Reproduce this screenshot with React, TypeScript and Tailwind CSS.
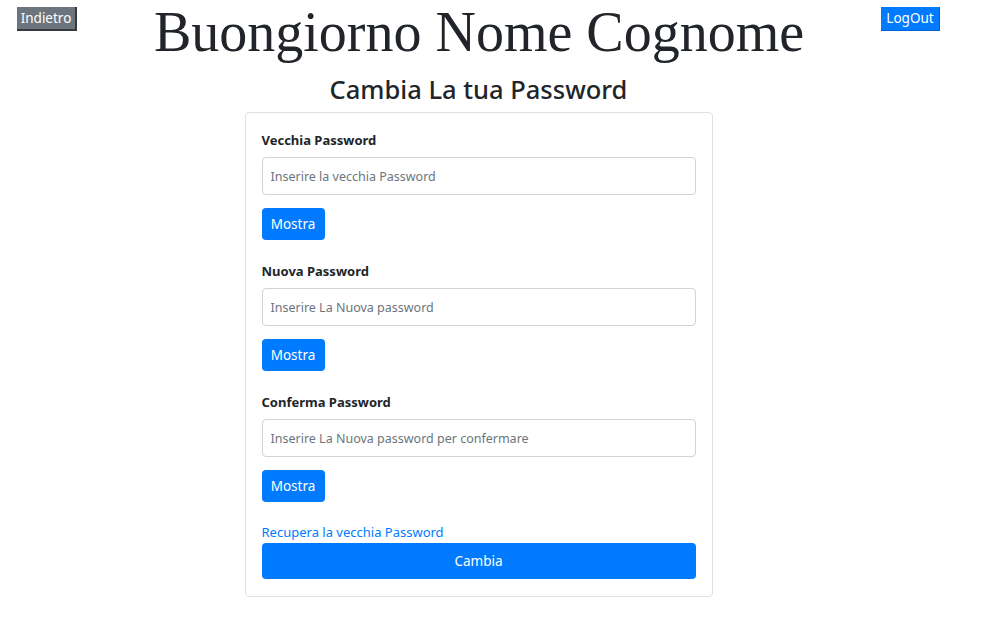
import React from 'react';

const sans = "font-['Noto_Sans','Liberation_Sans',sans-serif]";

type FieldProps = { label: string; placeholder: string; first?: boolean };

const Field: React.FC<FieldProps> = ({ label, placeholder, first }) => (
  <div className={first ? '' : 'mt-[21px]'}>
    <label className="block text-[13px] leading-[20px] font-bold text-[#212529]">{label}</label>
    <input
      type="password"
      placeholder={placeholder}
      className="mt-[7px] block w-full h-[38px] border border-[#ced4da] rounded-[4px] px-[8px] text-[12.5px] text-[#495057] placeholder:text-[#6c757d] outline-none"
    />
    <button className="mt-[13px] block h-[32px] w-[63px] rounded-[4px] bg-[#007bff] text-white text-[13.5px]">
      Mostra
    </button>
  </div>
);

export default function App() {
  return (
    <div className={`w-[957px] min-h-[637px] bg-white ${sans}`}>
      <header className="flex justify-between items-start px-[17px]">
        <button className="mt-[7px] h-[24px] w-[60px] bg-[#6c757d] text-white text-[13.5px] border-r-2 border-b-2 border-[#343a40]">
          Indietro
        </button>
        <h1 className="mt-[4px] text-[56px] leading-[56px] text-[#212529] font-['Liberation_Serif',serif]">
          Buongiorno Nome Cognome
        </h1>
        <button className="mt-[7px] h-[24px] w-[59px] bg-[#007bff] text-white text-[13.5px] border-r border-b border-[#0062cc]">
          LogOut
        </button>
      </header>
      <h2 className="mt-[14px] text-center text-[25.5px] leading-[30px] font-medium text-[#212529]">
        Cambia La tua Password
      </h2>
      <div className="mx-auto mt-[8px] w-[468px] border border-[#dee2e6] rounded-[4px] px-[16px] pt-[17px] pb-[17px]">
        <Field first label="Vecchia Password" placeholder="Inserire la vecchia Password" />
        <Field label="Nuova Password" placeholder="Inserire La Nuova password" />
        <Field label="Conferma Password" placeholder="Inserire La Nuova password per confermare" />
        <a href="#" className="mt-[20px] block text-[13px] leading-[20px] text-[#007bff]">
          Recupera la vecchia Password
        </a>
        <button className="mt-[1px] block w-full h-[36px] rounded-[4px] bg-[#007bff] text-white text-[13.5px]">
          Cambia
        </button>
      </div>
    </div>
  );
}
